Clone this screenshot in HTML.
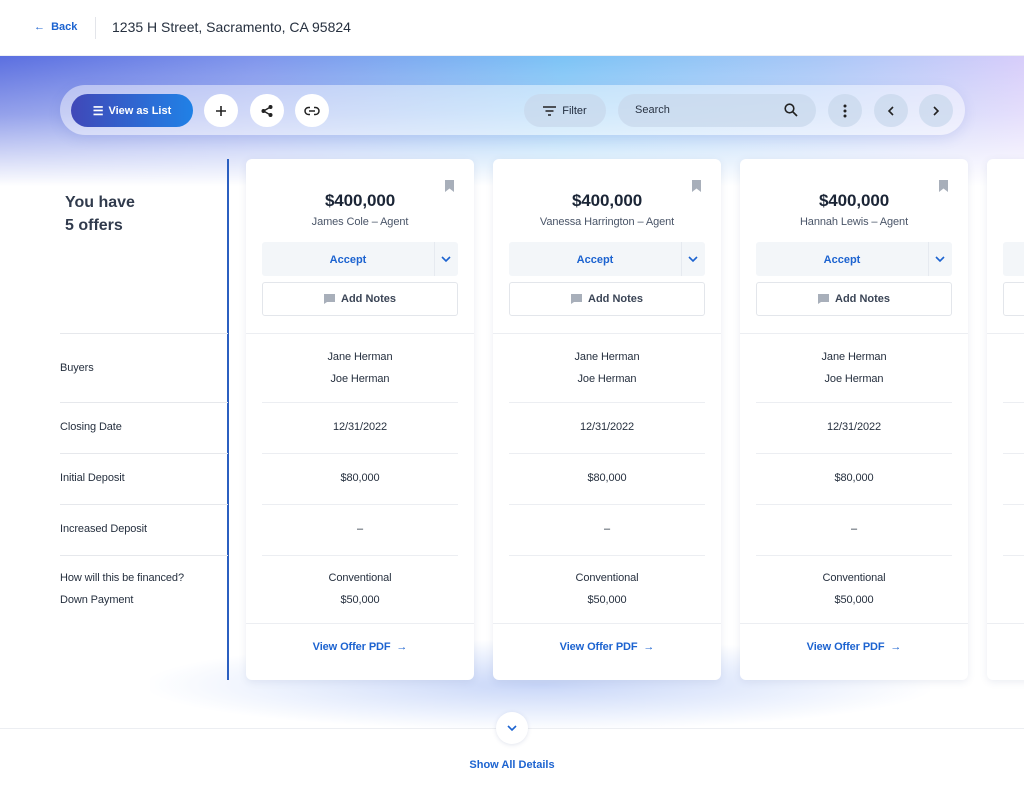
<!DOCTYPE html>
<html><head><meta charset="utf-8"><style>
*{box-sizing:border-box;margin:0;padding:0}
body{width:1024px;height:789px;overflow:hidden;background:#fff;font-family:"Liberation Sans",sans-serif;color:#1f2a3d;position:relative}
.hdr{position:absolute;left:0;top:0;width:1024px;height:56px;background:#fff;border-bottom:1px solid #eef0f4}
.back{position:absolute;left:34px;top:21px;color:#1c63d0;font-size:11px;font-weight:bold}
.sep{position:absolute;left:95px;top:17px;width:1px;height:22px;background:#e3e5ea}
.addr{position:absolute;left:112px;top:19px;font-size:14px;color:#26303f}
.band{position:absolute;left:0;top:56px;width:1024px;height:130px;background:linear-gradient(90deg,#5b6fe0 0%,#7f95ec 25%,#7cc3f6 55%,#a9c7f7 80%,#d7cdfa 100%)}
.bandfade{position:absolute;left:0;top:56px;width:1024px;height:130px;background:linear-gradient(180deg,rgba(255,255,255,0) 0%,rgba(255,255,255,.35) 45%,#fff 100%)}
.bot{position:absolute;left:150px;top:640px;width:780px;height:90px;background:radial-gradient(ellipse at center,#c8d6f8 0%,rgba(220,230,252,.6) 45%,rgba(255,255,255,0) 72%)}
.bar{position:absolute;left:60px;top:85px;width:905px;height:50px;border-radius:25px;background:rgba(255,255,255,.45);box-shadow:0 4px 12px rgba(90,110,200,.15)}
.btn{position:absolute;top:94px;height:33px;border-radius:17px}
.circ{width:34px;background:#fff;display:flex;align-items:center;justify-content:center}
.gc{width:34px;background:rgba(200,215,235,.7);display:flex;align-items:center;justify-content:center}
.card{position:absolute;top:159px;width:228px;height:521px;background:#fff;border-radius:6px;box-shadow:0 2px 8px rgba(60,80,140,.1)}
.c{position:absolute;left:0;width:100%;text-align:center;font-size:11px;color:#26303f;letter-spacing:-0.1px}
.ln{position:absolute;left:16px;right:16px;height:1px;background:#eceef2}
.lab{position:absolute;left:60px;font-size:11px;color:#26303f;letter-spacing:-0.1px}
.lln{position:absolute;left:60px;width:168px;height:1px;background:#e6e8ec}
</style></head><body>
<div class="hdr"><div class="back">←&nbsp; Back</div><div class="sep"></div><div class="addr">1235 H Street, Sacramento, CA 95824</div></div>
<div class="band"></div><div class="bandfade"></div>
<div class="bot"></div>
<div class="bar"></div>
<div class="btn" style="left:71px;width:122px;background:linear-gradient(90deg,#4048b8,#2081e6);color:#fff;font-size:11px;font-weight:bold;display:flex;align-items:center;justify-content:center;gap:5px"><span style="font-size:12px">☰</span>View as List</div>
<div class="btn circ" style="left:204px"><svg width="14" height="14"><path d="M7 2v10M2 7h10" stroke="#222" stroke-width="1.6"/></svg></div>
<div class="btn circ" style="left:250px"><svg width="14" height="14"><circle cx="10.5" cy="3" r="2" fill="#222"/><circle cx="3.5" cy="7" r="2" fill="#222"/><circle cx="10.5" cy="11" r="2" fill="#222"/><path d="M10.5 3L3.5 7l7 4" stroke="#222" stroke-width="1.4" fill="none"/></svg></div>
<div class="btn circ" style="left:295px"><svg width="16" height="10"><path d="M6 1.5H4.5a3.5 3.5 0 0 0 0 7H6M10 1.5h1.5a3.5 3.5 0 0 1 0 7H10M5 5h6" stroke="#222" stroke-width="1.5" fill="none"/></svg></div>
<div class="btn" style="left:524px;width:82px;background:rgba(200,215,235,.7);font-size:11px;display:flex;align-items:center;justify-content:center;gap:6px"><svg width="13" height="10"><path d="M0 1h13M2.5 5h8M5 9h3" stroke="#222" stroke-width="1.4"/></svg>Filter</div>
<div class="btn" style="left:618px;width:198px;background:rgba(200,215,235,.7);font-size:11px"><span style="position:absolute;left:17px;top:10px;color:#2a3444">Search</span><svg style="position:absolute;left:166px;top:9px" width="14" height="14"><circle cx="5.5" cy="5.5" r="4.3" stroke="#222" stroke-width="1.6" fill="none"/><path d="M8.7 8.7L13 13" stroke="#222" stroke-width="1.7"/></svg></div>
<div class="btn gc" style="left:828px"><svg width="4" height="14"><circle cx="2" cy="2" r="1.5" fill="#222"/><circle cx="2" cy="7" r="1.5" fill="#222"/><circle cx="2" cy="12" r="1.5" fill="#222"/></svg></div>
<div class="btn gc" style="left:874px"><svg width="8" height="10"><path d="M6 1L2 5l4 4" stroke="#222" stroke-width="1.6" fill="none"/></svg></div>
<div class="btn gc" style="left:919px"><svg width="8" height="10"><path d="M2 1l4 4-4 4" stroke="#222" stroke-width="1.6" fill="none"/></svg></div>

<div style="position:absolute;left:65px;top:191px;font-size:16px;line-height:23px;color:#1f2a3d;font-weight:bold;-webkit-text-stroke:0;opacity:.92">You have<br>5 offers</div>
<div style="position:absolute;left:227px;top:159px;width:1.5px;height:521px;background:#2b5fc0"></div>
<div class="lln" style="top:333px"></div><div class="lln" style="top:402px"></div><div class="lln" style="top:453px"></div><div class="lln" style="top:504px"></div><div class="lln" style="top:555px"></div>
<div class="lab" style="top:362px">Buyers</div>
<div class="lab" style="top:421px">Closing Date</div>
<div class="lab" style="top:472px">Initial Deposit</div>
<div class="lab" style="top:523px">Increased Deposit</div>
<div class="lab" style="top:572px">How will this be financed?</div>
<div class="lab" style="top:594px">Down Payment</div>

<div class="card" style="left:246px">
<svg style="position:absolute;left:199px;top:21px" width="9" height="12"><path d="M0 0h9v12L4.5 8.5 0 12z" fill="#a8afba"/></svg>
<div class="c" style="top:32px;font-size:17px;font-weight:bold;color:#1b2536">$400,000</div>
<div class="c" style="top:57px;color:#4a5568">James Cole – Agent</div>
<div style="position:absolute;left:16px;top:83px;width:196px;height:34px;background:#f3f6f9;border-radius:3px"><div style="position:absolute;left:0;width:172px;top:12px;text-align:center;color:#1c63d0;font-weight:bold;font-size:11px">Accept</div><div style="position:absolute;left:172px;top:0;width:1px;height:34px;background:#e6eaf0"></div><svg style="position:absolute;left:179px;top:14px" width="10" height="7"><path d="M1 1l4 4 4-4" stroke="#1c63d0" stroke-width="1.6" fill="none"/></svg></div>
<div style="position:absolute;left:16px;top:123px;width:196px;height:34px;border:1px solid #e3e6eb;border-radius:3px;display:flex;align-items:center;justify-content:center;gap:6px;font-size:11px;font-weight:bold;color:#3b4556"><svg width="11" height="10"><path d="M0 0h11v8H3l-3 2z" fill="#a8afba"/></svg>Add Notes</div>
<div class="ln" style="top:174px;left:0;right:0"></div>
<div class="c" style="top:192px">Jane Herman</div><div class="c" style="top:214px">Joe Herman</div>
<div class="ln" style="top:243px"></div>
<div class="c" style="top:262px">12/31/2022</div>
<div class="ln" style="top:294px"></div>
<div class="c" style="top:313px">$80,000</div>
<div class="ln" style="top:345px"></div>
<div class="c" style="top:364px">–</div>
<div class="ln" style="top:396px"></div>
<div class="c" style="top:413px">Conventional</div><div class="c" style="top:435px">$50,000</div>
<div class="ln" style="top:464px;left:0;right:0"></div>
<div class="c" style="top:482px;color:#1c63d0;font-weight:bold">View Offer PDF &nbsp;→</div>
</div>

<div class="card" style="left:493px">
<svg style="position:absolute;left:199px;top:21px" width="9" height="12"><path d="M0 0h9v12L4.5 8.5 0 12z" fill="#a8afba"/></svg>
<div class="c" style="top:32px;font-size:17px;font-weight:bold;color:#1b2536">$400,000</div>
<div class="c" style="top:57px;color:#4a5568">Vanessa Harrington – Agent</div>
<div style="position:absolute;left:16px;top:83px;width:196px;height:34px;background:#f3f6f9;border-radius:3px"><div style="position:absolute;left:0;width:172px;top:12px;text-align:center;color:#1c63d0;font-weight:bold;font-size:11px">Accept</div><div style="position:absolute;left:172px;top:0;width:1px;height:34px;background:#e6eaf0"></div><svg style="position:absolute;left:179px;top:14px" width="10" height="7"><path d="M1 1l4 4 4-4" stroke="#1c63d0" stroke-width="1.6" fill="none"/></svg></div>
<div style="position:absolute;left:16px;top:123px;width:196px;height:34px;border:1px solid #e3e6eb;border-radius:3px;display:flex;align-items:center;justify-content:center;gap:6px;font-size:11px;font-weight:bold;color:#3b4556"><svg width="11" height="10"><path d="M0 0h11v8H3l-3 2z" fill="#a8afba"/></svg>Add Notes</div>
<div class="ln" style="top:174px;left:0;right:0"></div>
<div class="c" style="top:192px">Jane Herman</div><div class="c" style="top:214px">Joe Herman</div>
<div class="ln" style="top:243px"></div>
<div class="c" style="top:262px">12/31/2022</div>
<div class="ln" style="top:294px"></div>
<div class="c" style="top:313px">$80,000</div>
<div class="ln" style="top:345px"></div>
<div class="c" style="top:364px">–</div>
<div class="ln" style="top:396px"></div>
<div class="c" style="top:413px">Conventional</div><div class="c" style="top:435px">$50,000</div>
<div class="ln" style="top:464px;left:0;right:0"></div>
<div class="c" style="top:482px;color:#1c63d0;font-weight:bold">View Offer PDF &nbsp;→</div>
</div>

<div class="card" style="left:740px">
<svg style="position:absolute;left:199px;top:21px" width="9" height="12"><path d="M0 0h9v12L4.5 8.5 0 12z" fill="#a8afba"/></svg>
<div class="c" style="top:32px;font-size:17px;font-weight:bold;color:#1b2536">$400,000</div>
<div class="c" style="top:57px;color:#4a5568">Hannah Lewis – Agent</div>
<div style="position:absolute;left:16px;top:83px;width:196px;height:34px;background:#f3f6f9;border-radius:3px"><div style="position:absolute;left:0;width:172px;top:12px;text-align:center;color:#1c63d0;font-weight:bold;font-size:11px">Accept</div><div style="position:absolute;left:172px;top:0;width:1px;height:34px;background:#e6eaf0"></div><svg style="position:absolute;left:179px;top:14px" width="10" height="7"><path d="M1 1l4 4 4-4" stroke="#1c63d0" stroke-width="1.6" fill="none"/></svg></div>
<div style="position:absolute;left:16px;top:123px;width:196px;height:34px;border:1px solid #e3e6eb;border-radius:3px;display:flex;align-items:center;justify-content:center;gap:6px;font-size:11px;font-weight:bold;color:#3b4556"><svg width="11" height="10"><path d="M0 0h11v8H3l-3 2z" fill="#a8afba"/></svg>Add Notes</div>
<div class="ln" style="top:174px;left:0;right:0"></div>
<div class="c" style="top:192px">Jane Herman</div><div class="c" style="top:214px">Joe Herman</div>
<div class="ln" style="top:243px"></div>
<div class="c" style="top:262px">12/31/2022</div>
<div class="ln" style="top:294px"></div>
<div class="c" style="top:313px">$80,000</div>
<div class="ln" style="top:345px"></div>
<div class="c" style="top:364px">–</div>
<div class="ln" style="top:396px"></div>
<div class="c" style="top:413px">Conventional</div><div class="c" style="top:435px">$50,000</div>
<div class="ln" style="top:464px;left:0;right:0"></div>
<div class="c" style="top:482px;color:#1c63d0;font-weight:bold">View Offer PDF &nbsp;→</div>
</div>

<div class="card" style="left:987px">
<div style="position:absolute;left:16px;top:83px;width:196px;height:34px;background:#f3f6f9;border-radius:3px"></div>
<div style="position:absolute;left:16px;top:123px;width:196px;height:34px;border:1px solid #e3e6eb;border-radius:3px"></div>
<div class="ln" style="top:174px;left:0;right:0"></div>
<div class="ln" style="top:243px"></div><div class="ln" style="top:294px"></div><div class="ln" style="top:345px"></div><div class="ln" style="top:396px"></div>
<div class="ln" style="top:464px;left:0;right:0"></div>
</div>

<div style="position:absolute;left:0;top:728px;width:1024px;height:61px;background:#fff;border-top:1px solid #eceef2"></div>
<div style="position:absolute;left:496px;top:712px;width:32px;height:32px;border-radius:50%;background:#fff;box-shadow:0 1px 4px rgba(60,80,140,.15);display:flex;align-items:center;justify-content:center"><svg width="10" height="7"><path d="M1 1l4 4 4-4" stroke="#1c63d0" stroke-width="1.6" fill="none"/></svg></div>
<div style="position:absolute;left:0;width:1024px;top:759px;text-align:center;font-size:11px;font-weight:bold;color:#1c63d0">Show All Details</div>
</body></html>
